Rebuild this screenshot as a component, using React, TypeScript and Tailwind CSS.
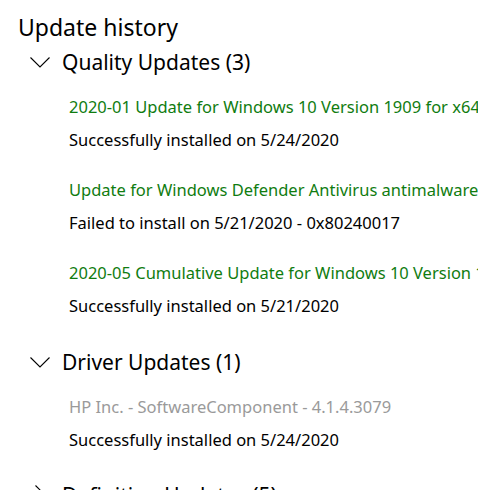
import React from "react";

type Item = { title: string; status: string; tone: "green" | "gray" };

const quality: Item[] = [
	{
		title: "2020-01 Update for Windows 10 Version 1909 for x64-based Systems (KB4524244)",
		status: "Successfully installed on 5/24/2020",
		tone: "green"
	},
	{
		title: "Update for Windows Defender Antivirus antimalware platform - KB4052623 (Version 4.18.2004.6)",
		status: "Failed to install on 5/21/2020 - 0x80240017",
		tone: "green"
	},
	{
		title: "2020-05 Cumulative Update for Windows 10 Version 1909 for x64-based Systems (KB4556799)",
		status: "Successfully installed on 5/21/2020",
		tone: "green"
	}
];

const drivers: Item[] = [
	{
		title: "HP Inc. - SoftwareComponent - 4.1.4.3079",
		status: "Successfully installed on 5/24/2020",
		tone: "gray"
	}
];

const Chevron = ({ open }: { open: boolean }) => (
	<svg width="20" height="20" viewBox="0 0 20 20" className="shrink-0">
		{open ? (
			<polyline points="0.5,5.5 10,15 19.5,5.5" fill="none" stroke="#000" strokeWidth="1.1" />
		) : (
			<polyline points="5.5,0.5 15,10 5.5,19.5" fill="none" stroke="#000" strokeWidth="1.1" />
		)}
	</svg>
);

const Section = ({
	label,
	open,
	items,
	className
}: {
	label: string;
	open: boolean;
	items: Item[];
	className?: string;
}) => (
	<div className={className}>
		<div className="flex items-center h-[40px] pl-[30px] gap-[12px]">
			<Chevron open={open} />
			<span className="text-[21px] leading-[40px] whitespace-nowrap">{label}</span>
		</div>
		{open && (
			<div className="flex flex-col gap-[17px] pt-[8px] pl-[69px]">
				{items.map((item, i) => (
					<div key={i} className="flex flex-col">
						<a
							className={
								item.tone === "green"
									? "text-[#107c10] text-[16.5px] leading-[33px] whitespace-nowrap"
									: "text-[#9a9a9a] text-[16.5px] leading-[33px] whitespace-nowrap"
							}
						>
							{item.title}
						</a>
						<span className="text-[16.5px] leading-[33px] whitespace-nowrap">
							{item.status}
						</span>
					</div>
				))}
			</div>
		)}
	</div>
);

export default function App() {
	return (
		<div
			className="w-[478px] h-[490px] overflow-hidden bg-white text-black pt-[12px]"
			style={{ fontFamily: '"Noto Sans", "Open Sans", sans-serif' }}
		>
			<h1 className="text-[23px] leading-[30px] pl-[18px] whitespace-nowrap">Update history</h1>
			<Section label="Quality Updates (3)" open items={quality} />
			<Section label="Driver Updates (1)" open items={drivers} className="mt-[20px]" />
			<Section label="Definition Updates (5)" open={false} items={[]} className="mt-[19px]" />
		</div>
	);
}
